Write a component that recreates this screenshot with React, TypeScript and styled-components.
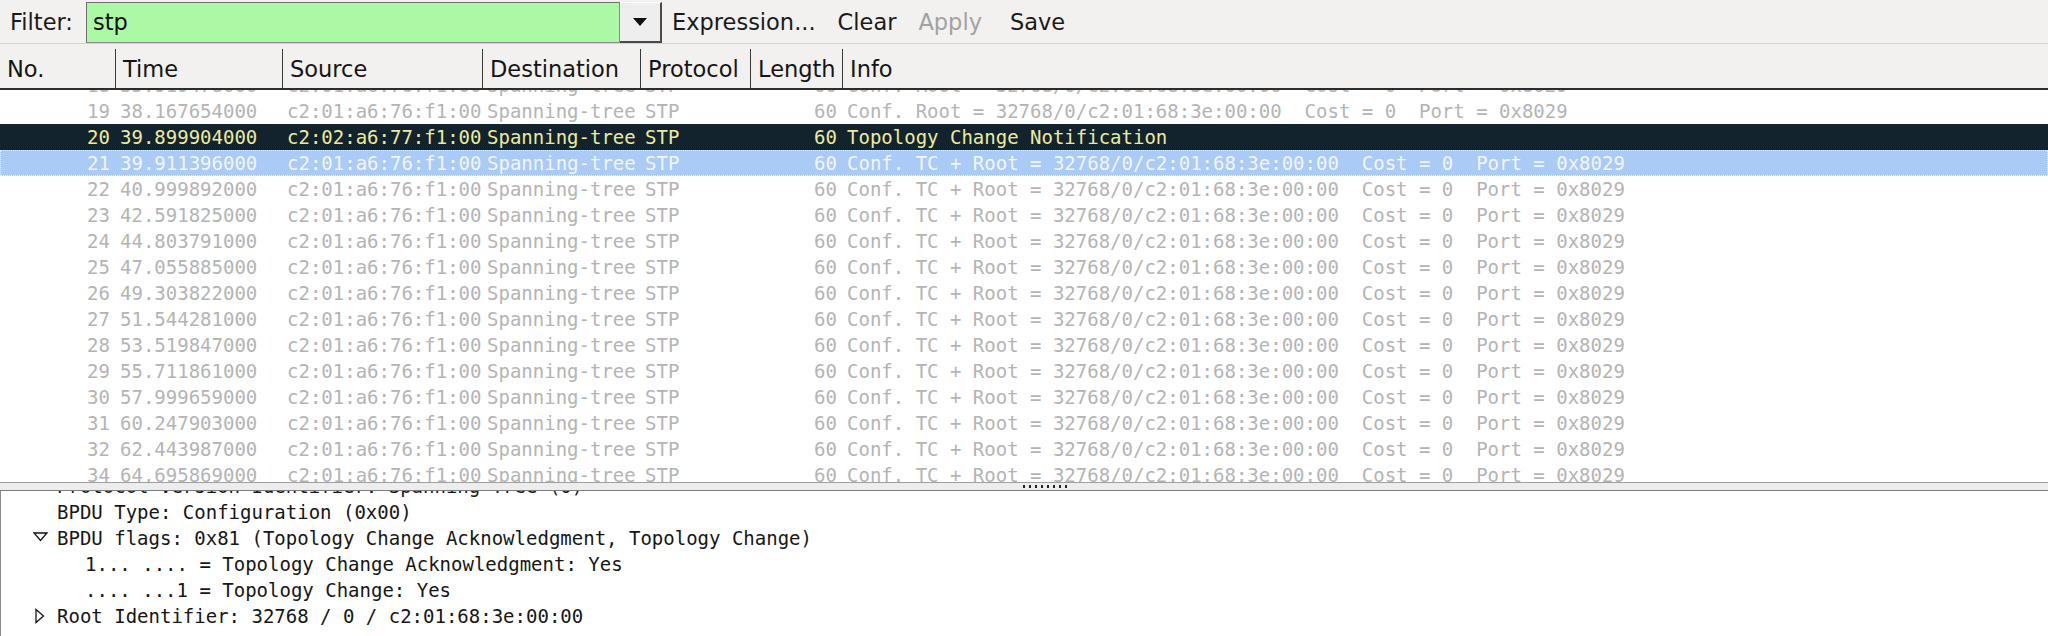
import React from "react";
import styled, { createGlobalStyle } from "styled-components";

const GlobalStyle = createGlobalStyle`
  html, body { margin: 0; padding: 0; background: #ffffff; }
  body { width: 2048px; height: 636px; overflow: hidden; font-family: "DejaVu Sans", "Liberation Sans", sans-serif; }
`;

const COLS = "115px 167px 200px 158px 110px 92px 1fr";

const Window = styled.div`
  width: 2048px;
  height: 636px;
  display: flex;
  flex-direction: column;
  overflow: hidden;
  background: #ffffff;
`;

const Toolbar = styled.div`
  flex: none;
  height: 44px;
  box-sizing: border-box;
  padding-top: 2px;
  display: flex;
  align-items: stretch;
  background: #f2f1f0;
  border-bottom: 1px solid #d2d2d2;
  font-size: 22.5px;
  color: #1a1a1a;
`;

const FilterLabel = styled.label`
  display: flex;
  align-items: center;
  width: 86px;
  box-sizing: border-box;
  padding-left: 10px;
  padding-bottom: 2px;
`;

const FilterInput = styled.div`
  width: 534px;
  box-sizing: border-box;
  display: flex;
  align-items: center;
  padding-left: 6px;
  padding-bottom: 2px;
  background: #abf9a5;
  border: 1px solid #8c8c8c;
  border-top-color: #6e6e6e;
  border-left-color: #6e6e6e;
  color: #101010;
`;

const DropButton = styled.div`
  width: 42px;
  box-sizing: border-box;
  display: flex;
  align-items: center;
  justify-content: center;
  background: #eeeeee;
  border-right: 2px solid #4a4a4a;
  border-bottom: 2px solid #4a4a4a;
  border-top: 1px solid #ffffff;
`;

const ToolButton = styled.div<{ $disabled?: boolean; $extra?: number }>`
  display: flex;
  align-items: center;
  padding: 0 11px 2px 11px;
  margin-left: ${(p) => p.$extra ?? 0}px;
  color: ${(p) => (p.$disabled ? "#a2a2a2" : "#1a1a1a")};
`;

const ButtonGroup = styled.div`
  display: flex;
  align-items: stretch;
  margin-left: -1px;
`;

const HeaderRow = styled.div`
  flex: none;
  height: 46px;
  box-sizing: border-box;
  display: grid;
  grid-template-columns: ${COLS};
  background: #f2f1f0;
  border-bottom: 2px solid #2c2c2c;
`;

const HeaderCell = styled.div<{ $first?: boolean }>`
  margin-top: 5px;
  display: flex;
  align-items: center;
  padding-left: 7px;
  border-left: ${(p) => (p.$first ? "none" : "1px solid #3a3a3a")};
  font-size: 22.5px;
  color: #141414;
  white-space: nowrap;
  overflow: hidden;
`;

const PacketList = styled.div`
  flex: none;
  height: 392px;
  overflow: hidden;
  background: #ffffff;
`;

const PacketRows = styled.div`
  margin-top: -18px;
`;

type Variant = "normal" | "marked" | "selected";

const rowBg: Record<Variant, string> = {
  normal: "#ffffff",
  marked: "#13232e",
  selected: "#a9cbf6",
};
const rowFg: Record<Variant, string> = {
  normal: "#b4b4b4",
  marked: "#ebeba0",
  selected: "#f2f5fa",
};

const PacketRow = styled.div<{ $variant: Variant }>`
  display: grid;
  grid-template-columns: ${COLS};
  height: 26px;
  box-sizing: border-box;
  font-family: "DejaVu Sans Mono", "Liberation Mono", monospace;
  font-size: 19px;
  line-height: 26px;
  background: ${(p) => rowBg[p.$variant]};
  color: ${(p) => rowFg[p.$variant]};
  outline: ${(p) => (p.$variant === "selected" ? "1px dotted #e6eef8" : "none")};
  outline-offset: -1px;
`;

const Cell = styled.div<{ $right?: boolean }>`
  padding: 0 5px;
  white-space: pre;
  overflow: hidden;
  text-align: ${(p) => (p.$right ? "right" : "left")};
`;

const Splitter = styled.div`
  flex: none;
  height: 9px;
  box-sizing: border-box;
  background: #ededed;
  border-top: 1px solid #a0a0a0;
  border-bottom: 1px solid #7c7c7c;
  padding-left: 1021px;
  display: flex;
  align-items: center;
`;

const Grip = styled.div`
  width: 48px;
  height: 3px;
  background-image: radial-gradient(circle, #222 0 1.2px, transparent 1.4px);
  background-size: 6px 3px;
`;

const DetailPane = styled.div`
  flex: 1;
  overflow: hidden;
  background: #ffffff;
  border-left: 1px solid #8a8a8a;
`;

const DetailLines = styled.div`
  margin-top: -18px;
`;

const DetailLine = styled.div<{ $level: number }>`
  display: flex;
  align-items: center;
  height: 26px;
  padding-left: ${(p) => 29 + p.$level * 28}px;
  font-family: "DejaVu Sans Mono", "Liberation Mono", monospace;
  font-size: 19px;
  color: #161616;
  white-space: pre;
`;

const Expander = styled.span`
  flex: none;
  width: 27px;
  height: 26px;
  display: flex;
  align-items: center;
`;

const OpenArrow = () => (
  <svg width="16" height="10" viewBox="0 0 16 10" style={{ marginLeft: 3, marginTop: -2 }}>
    <polygon points="1,1 14,1 7.5,8.5" fill="none" stroke="#111" strokeWidth="1.3" />
  </svg>
);

const ClosedArrow = () => (
  <svg width="10" height="16" viewBox="0 0 10 16" style={{ marginLeft: 5 }}>
    <polygon points="1,1.5 8.5,8 1,14.5" fill="none" stroke="#111" strokeWidth="1.3" />
  </svg>
);

const DownTriangle = () => (
  <svg width="14" height="8" viewBox="0 0 14 8">
    <polygon points="0,0 14,0 7,8" fill="#111" />
  </svg>
);

interface Packet {
  no: number;
  time: string;
  src: string;
  variant: Variant;
  info: string;
}

const conf = (tc: boolean) =>
  `Conf. ${tc ? "TC + " : ""}Root = 32768/0/c2:01:68:3e:00:00  Cost = 0  Port = 0x8029`;

const packets: Packet[] = [
  { no: 18, time: "35.919478000", src: "c2:01:a6:76:f1:00", variant: "normal", info: conf(false) },
  { no: 19, time: "38.167654000", src: "c2:01:a6:76:f1:00", variant: "normal", info: conf(false) },
  { no: 20, time: "39.899904000", src: "c2:02:a6:77:f1:00", variant: "marked", info: "Topology Change Notification" },
  { no: 21, time: "39.911396000", src: "c2:01:a6:76:f1:00", variant: "selected", info: conf(true) },
  { no: 22, time: "40.999892000", src: "c2:01:a6:76:f1:00", variant: "normal", info: conf(true) },
  { no: 23, time: "42.591825000", src: "c2:01:a6:76:f1:00", variant: "normal", info: conf(true) },
  { no: 24, time: "44.803791000", src: "c2:01:a6:76:f1:00", variant: "normal", info: conf(true) },
  { no: 25, time: "47.055885000", src: "c2:01:a6:76:f1:00", variant: "normal", info: conf(true) },
  { no: 26, time: "49.303822000", src: "c2:01:a6:76:f1:00", variant: "normal", info: conf(true) },
  { no: 27, time: "51.544281000", src: "c2:01:a6:76:f1:00", variant: "normal", info: conf(true) },
  { no: 28, time: "53.519847000", src: "c2:01:a6:76:f1:00", variant: "normal", info: conf(true) },
  { no: 29, time: "55.711861000", src: "c2:01:a6:76:f1:00", variant: "normal", info: conf(true) },
  { no: 30, time: "57.999659000", src: "c2:01:a6:76:f1:00", variant: "normal", info: conf(true) },
  { no: 31, time: "60.247903000", src: "c2:01:a6:76:f1:00", variant: "normal", info: conf(true) },
  { no: 32, time: "62.443987000", src: "c2:01:a6:76:f1:00", variant: "normal", info: conf(true) },
  { no: 34, time: "64.695869000", src: "c2:01:a6:76:f1:00", variant: "normal", info: conf(true) },
];

const columns = ["No.", "Time", "Source", "Destination", "Protocol", "Length", "Info"];

interface Detail {
  level: number;
  arrow?: "open" | "closed";
  text: string;
}

const details: Detail[] = [
  { level: 0, text: "Protocol Version Identifier: Spanning Tree (0)" },
  { level: 0, text: "BPDU Type: Configuration (0x00)" },
  { level: 0, arrow: "open", text: "BPDU flags: 0x81 (Topology Change Acknowledgment, Topology Change)" },
  { level: 1, text: "1... .... = Topology Change Acknowledgment: Yes" },
  { level: 1, text: ".... ...1 = Topology Change: Yes" },
  { level: 0, arrow: "closed", text: "Root Identifier: 32768 / 0 / c2:01:68:3e:00:00" },
];

export default function App() {
  return (
    <>
      <GlobalStyle />
      <Window>
        <Toolbar>
          <FilterLabel>Filter:</FilterLabel>
          <FilterInput>stp</FilterInput>
          <DropButton>
            <DownTriangle />
          </DropButton>
          <ButtonGroup>
            <ToolButton>Expression...</ToolButton>
            <ToolButton>Clear</ToolButton>
            <ToolButton $disabled>Apply</ToolButton>
            <ToolButton $extra={6}>Save</ToolButton>
          </ButtonGroup>
        </Toolbar>
        <HeaderRow>
          {columns.map((c, i) => (
            <HeaderCell key={c} $first={i === 0}>
              {c}
            </HeaderCell>
          ))}
        </HeaderRow>
        <PacketList>
          <PacketRows>
            {packets.map((p) => (
              <PacketRow key={p.no} $variant={p.variant}>
                <Cell $right>{p.no}</Cell>
                <Cell>{p.time}</Cell>
                <Cell>{p.src}</Cell>
                <Cell>Spanning-tree</Cell>
                <Cell>STP</Cell>
                <Cell $right>60</Cell>
                <Cell>{p.info}</Cell>
              </PacketRow>
            ))}
          </PacketRows>
        </PacketList>
        <Splitter>
          <Grip />
        </Splitter>
        <DetailPane>
          <DetailLines>
            {details.map((d, i) => (
              <DetailLine key={i} $level={d.level}>
                <Expander>
                  {d.arrow === "open" && <OpenArrow />}
                  {d.arrow === "closed" && <ClosedArrow />}
                </Expander>
                {d.text}
              </DetailLine>
            ))}
          </DetailLines>
        </DetailPane>
      </Window>
    </>
  );
}
